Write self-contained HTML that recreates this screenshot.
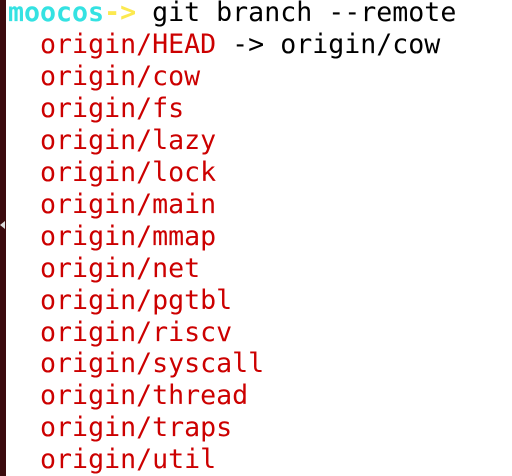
<!DOCTYPE html>
<html><head><style>
body{margin:0;width:512px;height:476px;background:#fff;overflow:hidden;position:relative}
.bar{position:absolute;left:0;top:0;width:6px;height:476px;background:#3b0b0e}
.tri{position:absolute;left:0;top:221px;width:0;height:0;border-top:4px solid transparent;border-bottom:4px solid transparent;border-right:5px solid #ddd}
pre{position:absolute;left:8px;top:-3px;margin:0;font-family:"DejaVu Sans Mono","Liberation Mono",monospace;font-size:26.6px;line-height:31.95px;color:#000}
.c{color:#34e2e2;font-weight:bold}.y{color:#fce94f;font-weight:bold}.r{color:#cc0000}
</style></head><body>
<div class="bar"></div><div class="tri"></div>
<pre><span class="c">moocos</span><span class="y">-&gt;</span> git branch --remote
  <span class="r">origin/HEAD</span> -&gt; origin/cow
  <span class="r">origin/cow</span>
  <span class="r">origin/fs</span>
  <span class="r">origin/lazy</span>
  <span class="r">origin/lock</span>
  <span class="r">origin/main</span>
  <span class="r">origin/mmap</span>
  <span class="r">origin/net</span>
  <span class="r">origin/pgtbl</span>
  <span class="r">origin/riscv</span>
  <span class="r">origin/syscall</span>
  <span class="r">origin/thread</span>
  <span class="r">origin/traps</span>
  <span class="r">origin/util</span></pre>
</body></html>
